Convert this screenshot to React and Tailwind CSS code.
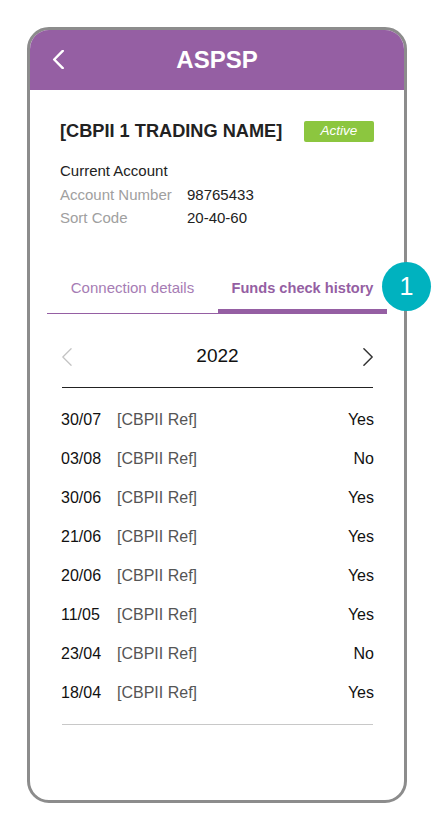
const rows = [
  { date: "30/07", ref: "[CBPII Ref]", result: "Yes" },
  { date: "03/08", ref: "[CBPII Ref]", result: "No" },
  { date: "30/06", ref: "[CBPII Ref]", result: "Yes" },
  { date: "21/06", ref: "[CBPII Ref]", result: "Yes" },
  { date: "20/06", ref: "[CBPII Ref]", result: "Yes" },
  { date: "11/05", ref: "[CBPII Ref]", result: "Yes" },
  { date: "23/04", ref: "[CBPII Ref]", result: "No" },
  { date: "18/04", ref: "[CBPII Ref]", result: "Yes" },
];

const Chevron = ({ dir = "left", className = "", strokeWidth = 2 }) => (
  <svg viewBox="0 0 12 20" className={className} fill="none" stroke="currentColor" strokeWidth={strokeWidth} strokeLinecap="round" strokeLinejoin="round">
    {dir === "left" ? <path d="M11 1 2 10l9 9" /> : <path d="M1 1l9 9-9 9" />}
  </svg>
);

const App = () => {
  return (
    <div className="relative w-[435px] h-[831px] bg-white pt-[27px] pl-[27px] font-['Liberation_Sans',Arial,sans-serif]">
      <div className="w-[380px] h-[776px] border-[3px] border-[#8c8c8c] rounded-[22px] bg-white">
        <div className="relative h-[60px] bg-[#955fa3] rounded-t-[19px] flex items-center justify-center">
          <Chevron dir="left" className="absolute left-[22px] top-[20px] w-[12px] h-[19px] text-white" strokeWidth={2.6} />
          <h1 className="text-[24px] font-bold text-white">ASPSP</h1>
        </div>

        <div className="px-[30px] pt-[31px]">
          <div className="flex items-center justify-between h-[21px]">
            <h2 className="text-[18.2px] font-bold text-[#222]">[CBPII 1 TRADING NAME]</h2>
            <span className="w-[70px] h-[21px] rounded-[2px] bg-[#8cc63f] text-white italic text-[13.5px] flex items-center justify-center">Active</span>
          </div>
          <div className="mt-[17px] text-[15px] leading-[23.5px]">
            <div className="text-[#222]">Current Account</div>
            <div className="flex">
              <span className="w-[127px] text-[#a0a0a0]">Account Number</span>
              <span className="text-[#222]">98765433</span>
            </div>
            <div className="flex">
              <span className="w-[127px] text-[#a0a0a0]">Sort Code</span>
              <span className="text-[#222]">20-40-60</span>
            </div>
          </div>
        </div>

        <div className="mt-[48px] px-[17px] flex items-end">
          <div className="w-[171px] flex flex-col">
            <span className="text-center text-[15px] leading-[20px] text-[#a67cb4] pb-[15px]">Connection details</span>
            <div className="h-[1px] bg-[#955fa3]" />
          </div>
          <div className="w-[169px] flex flex-col">
            <span className="text-center text-[14.6px] leading-[20px] font-bold text-[#955fa3] pb-[11px]">Funds check history</span>
            <div className="h-[5px] bg-[#955fa3]" />
          </div>
        </div>

        <div className="pl-[32px] pr-[31px]">
          <div className="mt-[23px] pb-[10px] border-b border-[#222]">
            <div className="h-[40px] flex items-center justify-between">
              <Chevron dir="left" className="w-[11px] h-[20px] ml-[-1px] text-[#c4c4c4]" strokeWidth={1.4} />
              <span className="text-[19px] text-[#111]">2022</span>
              <Chevron dir="right" className="w-[11px] h-[20px] mr-[-1px] text-[#333]" strokeWidth={1.6} />
            </div>
          </div>

          <div className="pt-[12.5px] pb-[12px] border-b border-[#c8c8c8]">
            {rows.map((row, index) => (
              <div key={index} className="h-[39px] flex items-center text-[16px]">
                <span className="w-[56px] -ml-[1px] text-[#111]">{row.date}</span>
                <span className="flex-1 text-[#555]">{row.ref}</span>
                <span className="-mr-[1px] text-[#111]">{row.result}</span>
              </div>
            ))}
          </div>
        </div>
      </div>

      <div className="absolute left-[382px] top-[262px] w-[49px] h-[49px] rounded-full bg-[#00b2bf] flex items-center justify-center">
        <span className="text-white text-[25px]">1</span>
      </div>
    </div>
  );
};

export default App;
